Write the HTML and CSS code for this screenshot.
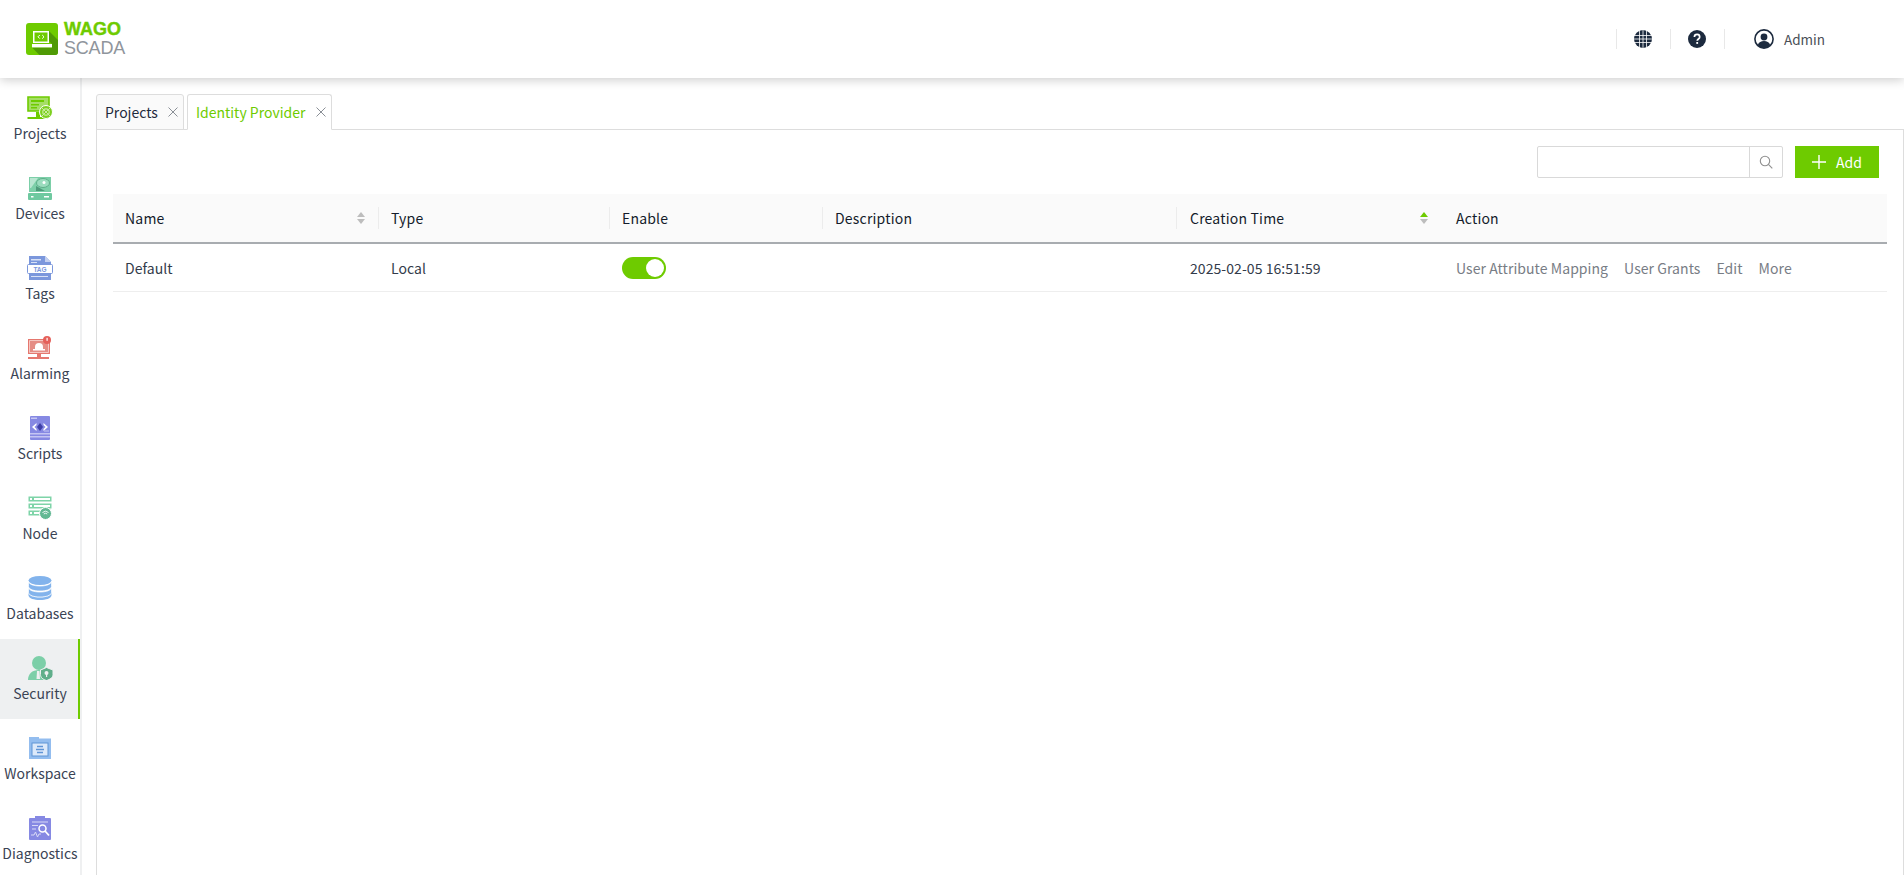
FILE: index.html
```html
<!DOCTYPE html>
<html lang="en">
<head>
<meta charset="utf-8">
<title>WAGO SCADA</title>
<link rel="stylesheet" href="styles.css">
</head>
<body>
<header class="topbar">
  <div class="brand">
    <svg class="brand-mark" viewBox="0 0 32 32" width="32" height="32">
      <rect width="32" height="32" rx="3" fill="#6ecb00"/>
      <path d="M6 24.600 L26 24.600 L26 21 L23 18 L23 8 L32 17 L32 29 A3 3 0 0 1 29 32 L13.500 32 Z" fill="#4f9a05"/>
      <rect x="7" y="8" width="16" height="12" fill="#fff"/>
      <rect x="8.500" y="9.500" width="13" height="9" fill="#6ecb00"/>
      <rect x="6" y="21" width="20" height="3.400" fill="#fff"/>
      <path d="M13.800 12 L12 13.800 L13.800 15.600 M16.200 12 L18 13.800 L16.200 15.600" fill="none" stroke="#fff" stroke-width="1"/>
    </svg>
    <div class="brand-text">
      <span class="brand-wago">WAGO</span>
      <span class="brand-scada">SCADA</span>
    </div>
  </div>
  <div class="top-actions">
    <span class="top-sep"></span>
    <svg class="top-icon" viewBox="0 0 18 18" width="18" height="18">
      <circle cx="9" cy="9" r="9" fill="#1c2a3e"/>
      <path d="M0 5.500H18M0 9H18M0 12.500H18M5.500 0V18M9 0V18M12.500 0V18" stroke="#fff" stroke-width=".8" fill="none"/>
    </svg>
    <span class="top-sep"></span>
    <svg class="top-icon" viewBox="0 0 18 18" width="18" height="18">
      <circle cx="9" cy="9" r="9" fill="#1c2a3e"/>
      <path d="M6.400 7c0-1.600 1.200-2.600 2.700-2.600S11.700 5.400 11.700 6.900c0 2-2.500 2.100-2.500 3.900" fill="none" stroke="#fff" stroke-width="1.700"/>
      <rect x="8.300" y="12" width="1.800" height="1.900" fill="#fff"/>
    </svg>
    <span class="top-sep"></span>
    <div class="user">
      <svg viewBox="0 0 20 20" width="20" height="20">
        <circle cx="10" cy="10" r="9.100" fill="none" stroke="#1c2a3e" stroke-width="1.600"/>
        <circle cx="10" cy="8" r="3.400" fill="#1c2a3e"/>
        <path d="M3.800 16c1-3 3.300-4 6.200-4s5.200 1 6.200 4c-1.600 1.700-3.800 3-6.200 3s-4.600-1.300-6.200-3z" fill="#1c2a3e"/>
      </svg>
      <span class="user-name">Admin</span>
    </div>
  </div>
</header>

<div class="layout">
  <nav class="sidebar">
    <a class="nav-item">
      <svg viewBox="0 0 26 24" width="26" height="24">
        <path d="M1 1H22V15H1Z" fill="#a6de66" stroke="#6ecb00" stroke-width="1.600"/>
        <path d="M4 4H17V6H4ZM4 8H12V9.500H4ZM4 11H10V12.500H4Z" fill="#6ecb00"/>
        <rect x="0.500" y="21" width="20" height="2" fill="#6ecb00"/>
        <rect x="9" y="16" width="4" height="5" fill="#6ecb00"/>
        <circle cx="19" cy="16" r="6.500" fill="#7ccf1e" stroke="#fff"/>
        <circle cx="19" cy="16" r="3.200" fill="none" stroke="#c8eda0" stroke-width="1.200"/>
        <path d="M15 12L23 20M23 12L15 20" stroke="#c8eda0"/>
      </svg>
      <span>Projects</span>
    </a>
    <a class="nav-item">
      <svg viewBox="0 0 26 24" width="26" height="24">
        <path d="M2 1H24V16H2Z" fill="#7ccfa8"/>
        <path d="M3 2H11L4 12H3Z" fill="#b9e6d1"/>
        <ellipse cx="16" cy="7" rx="6.500" ry="4.500" fill="#9bdcbe" stroke="#5fae8a"/>
        <circle cx="17" cy="6.500" r="1.500" fill="#fff"/>
        <path d="M9 10L18 15H9Z" fill="#4e9a7a"/>
        <rect x="1" y="17" width="24" height="7" rx="1" fill="#6fc9a0"/>
        <rect x="4" y="20" width="2.500" height="1.500" fill="#fff"/>
        <rect x="17" y="20" width="5" height="1.500" fill="#fff"/>
      </svg>
      <span>Devices</span>
    </a>
    <a class="nav-item">
      <svg viewBox="0 0 26 24" width="26" height="24">
        <path d="M2 0H18L24 6V24H2Z" fill="#7b97dc"/>
        <path d="M18 0L24 6H18Z" fill="#c2cff0"/>
        <path d="M4 3H14V4.500H4ZM4 6H10V7H4ZM4 20H21V21H4Z" fill="#d8e1f6"/>
        <rect x="0.500" y="8.500" width="25" height="9" rx="1" fill="#fff" stroke="#7b97dc"/>
        <text class="icon-tag" x="13" y="16">TAG</text>
      </svg>
      <span>Tags</span>
    </a>
    <a class="nav-item">
      <svg viewBox="0 0 26 24" width="26" height="24">
        <path d="M1 3H23V18H1Z" fill="#e5776e"/>
        <path d="M2.500 4.500H21.500V16.500H2.500Z" fill="#e58d85" stroke="#f5c7c2"/>
        <path d="M8 11a4 4 0 0 1 8 0v2H8Z" fill="#fff"/>
        <rect x="6" y="13" width="12" height="1.500" fill="#fff"/>
        <rect x="10" y="18" width="4" height="3" fill="#e5776e"/>
        <rect x="1" y="21" width="21" height="2" fill="#e5776e"/>
        <circle cx="20" cy="4" r="4" fill="#e5605a"/>
        <rect x="19.500" y="1.800" width="1.200" height="3" fill="#fff"/>
      </svg>
      <span>Alarming</span>
    </a>
    <a class="nav-item">
      <svg viewBox="0 0 26 24" width="26" height="24">
        <rect x="3" y="0" width="20" height="24" rx="1" fill="#8689e3"/>
        <rect x="4" y="1.500" width="6" height="1.500" fill="#c5c6f3"/>
        <path d="M9.500 7L5 11L9.500 15L9.500 13L7.500 11L9.500 9ZM16.500 7L21 11L16.500 15L16.500 13L18.500 11L16.500 9Z" fill="#fff"/>
        <path d="M13 7L16 11L13 15L10 11Z" fill="#3f3fa8"/>
        <path d="M17 14.500H22V15.500H17Z" fill="#c5c6f3"/>
        <rect x="3" y="17" width="20" height="1.500" fill="#c5c6f3"/>
        <rect x="3" y="20" width="20" height="1.500" fill="#c5c6f3"/>
      </svg>
      <span>Scripts</span>
    </a>
    <a class="nav-item">
      <svg viewBox="0 0 26 24" width="26" height="24">
        <rect x="1.500" y="0.500" width="23" height="5" fill="#7ed4a8"/>
        <rect x="1.500" y="7.500" width="23" height="5" fill="#7ed4a8"/>
        <rect x="1.500" y="14.500" width="17" height="5" fill="#7ed4a8"/>
        <rect x="3" y="2" width="2" height="2" fill="#fff"/><rect x="7" y="2" width="16" height="2" fill="#fff"/>
        <rect x="3" y="9" width="2" height="2" fill="#fff"/><rect x="7" y="9" width="16" height="2" fill="#fff"/>
        <rect x="3" y="16" width="2" height="2" fill="#fff"/><rect x="7" y="16" width="10" height="2" fill="#fff"/>
        <circle cx="18.500" cy="17.500" r="6" fill="#62b893" stroke="#fff"/>
        <path d="M15.500 16.500a4.500 4.500 0 0 1 6 0M16.800 18a2.500 2.500 0 0 1 3.400 0" fill="none" stroke="#fff" stroke-width=".9"/>
      </svg>
      <span>Node</span>
    </a>
    <a class="nav-item">
      <svg viewBox="0 0 26 24" width="26" height="24">
        <ellipse cx="13" cy="4.500" rx="11.500" ry="4.500" fill="#82b3ec"/>
        <path d="M1.500 5.500c.5 3 5.500 4.500 11.500 4.500s11-1.500 11.500-4.500v5c-.5 3-5.500 4.500-11.500 4.500S2 13.500 1.500 10.500Z" fill="#82b3ec" stroke="#fff" stroke-width=".7"/>
        <path d="M1.500 11.500c.5 3 5.500 4.500 11.500 4.500s11-1.500 11.500-4.500v5c-.5 3-5.500 4.500-11.500 4.500S2 19.500 1.500 16.500Z" fill="#82b3ec" stroke="#fff" stroke-width=".7"/>
        <path d="M1.500 17c.5 3 5.500 4.500 11.500 4.500s11-1.500 11.500-4.500v2.500c-.5 3-5.500 4.500-11.500 4.500S2 22.500 1.500 19.500Z" fill="#82b3ec"/>
      </svg>
      <span>Databases</span>
    </a>
    <a class="nav-item is-active">
      <svg viewBox="0 0 26 24" width="26" height="24">
        <circle cx="12" cy="7" r="7" fill="#7ccfa8"/>
        <path d="M1 24c0-6 4-10 11-10s9 4 9 10Z" fill="#7ccfa8"/>
        <path d="M10 15L9.500 23H13L12.500 15Z" fill="#eef0f1"/>
        <path d="M19.500 11.500L26 14V18.500C26 21.500 23 23.500 19.500 24.500C16 23.500 13.500 21.500 13.500 18.500V14Z" fill="#5fae8a" stroke="#eef0f1"/>
        <circle cx="19.500" cy="17" r="2" fill="#eef0f1"/>
        <rect x="19" y="18" width="1.200" height="3" fill="#eef0f1"/>
      </svg>
      <span>Security</span>
    </a>
    <a class="nav-item">
      <svg viewBox="0 0 26 24" width="26" height="24">
        <path d="M2 1H12V2.500H24V23H2Z" fill="#93bdef"/>
        <rect x="5" y="7" width="16" height="13" fill="#dce9fa" stroke="#5f95d6"/>
        <path d="M10 10.500H16M9 13.500H17M10 16.500H16" stroke="#5f95d6" stroke-width="1.500"/>
      </svg>
      <span>Workspace</span>
    </a>
    <a class="nav-item">
      <svg viewBox="0 0 26 24" width="26" height="24">
        <rect x="8" y="0" width="10" height="3" fill="#8689e3"/>
        <rect x="2" y="2" width="22" height="22" rx="1" fill="#8689e3"/>
        <path d="M5 6H21M5 9.500H11M5 13H9" stroke="#d9daf6" fill="none"/>
        <path d="M4 19H7L8.500 16L10.500 21L12 18H14" stroke="#d9daf6" fill="none"/>
        <circle cx="15.500" cy="12.500" r="3.500" fill="none" stroke="#fff" stroke-width="1.500"/>
        <path d="M18 15L22 19.500" stroke="#fff" stroke-width="1.800"/>
      </svg>
      <span>Diagnostics</span>
    </a>
  </nav>

  <main class="content">
    <div class="tabs">
      <div class="tab">
        <span>Projects</span>
        <svg class="tab-close" viewBox="0 0 10 10" width="10" height="10"><path d="M.5.500L9.500 9.500M9.500.500L.5 9.500" stroke="#8a8f96" fill="none"/></svg>
      </div>
      <div class="tab is-active">
        <span>Identity Provider</span>
        <svg class="tab-close" viewBox="0 0 10 10" width="10" height="10"><path d="M.5.500L9.500 9.500M9.500.500L.5 9.500" stroke="#8a8f96" fill="none"/></svg>
      </div>
    </div>
    <section class="panel">
      <div class="toolbar">
        <div class="search">
          <div class="search-field"></div>
          <div class="search-btn">
            <svg viewBox="0 0 14 14" width="14" height="14"><circle cx="6" cy="6" r="4.700" fill="none" stroke="#8f8f8f" stroke-width="1.100"/><path d="M9.400 9.400L13.300 13.300" stroke="#8f8f8f" stroke-width="1.100"/></svg>
          </div>
        </div>
        <button class="add-btn" type="button">
          <svg viewBox="0 0 14 14" width="14" height="14"><path d="M7 0V14M0 7H14" stroke="#fff" stroke-width="1.400"/></svg>
          <span>Add</span>
        </button>
      </div>
      <div class="grid grid-head">
        <div class="th th-first"><span>Name</span><span class="sort"><i class="up"></i><i class="down"></i></span></div>
        <div class="th">Type</div>
        <div class="th">Enable</div>
        <div class="th">Description</div>
        <div class="th th-time"><span>Creation Time</span><span class="sort"><i class="up on"></i><i class="down"></i></span></div>
        <div class="th th-plain">Action</div>
      </div>
      <div class="grid grid-row">
        <div class="td td-first">Default</div>
        <div class="td">Local</div>
        <div class="td"><span class="toggle"><span class="knob"></span></span></div>
        <div class="td"></div>
        <div class="td td-date">2025-02-05 16:51:59</div>
        <div class="td actions">
          <a>User Attribute Mapping</a><a>User Grants</a><a>Edit</a><a>More</a>
        </div>
      </div>
    </section>
  </main>
</div>
</body>
</html>
```
FILE: styles.css
```css
* { box-sizing: border-box; }
html, body { height: 100%; }
body {
  margin: 0;
  height: 100vh;
  overflow: hidden;
  display: flex;
  flex-direction: column;
  background: #fff;
  color: #1f2a3d;
  font: 14px/22px "Noto Sans CJK SC", "Noto Sans", sans-serif;
}
.topbar {
  height: 78px;
  flex: none;
  display: flex;
  justify-content: space-between;
  align-items: center;
  padding: 0 0 0 26px;
  background: #fff;
  box-shadow: 0 2px 10px rgba(0, 0, 0, .2);
  position: relative;
  z-index: 2;
}
.brand { display: flex; align-items: center; gap: 6px; }
.brand-text { display: flex; flex-direction: column; }
.brand-wago {
  font: 700 18px/19px "Liberation Sans", sans-serif;
  color: #6ecb00;
  -webkit-text-stroke: .4px #6ecb00;
}
.brand-scada {
  font: 400 18px/19px "Liberation Sans", sans-serif;
  color: #8f959c;
  letter-spacing: -.2px;
}
.top-actions { display: flex; align-items: center; height: 20px; margin-right: 79px; }
.top-sep { width: 1px; height: 20px; background: #e8e8e8; }
.top-icon { margin: 0 17.5px; }
.user { display: flex; align-items: center; gap: 10px; margin-left: 29px; }
.user-name { color: #4a4f57; font-size: 13.5px; }

.layout { flex: 1; display: flex; min-height: 0; }
.sidebar {
  width: 82px;
  flex: none;
  padding-top: 1px;
  overflow: hidden;
  border-right: 2px solid #eff0f1;
}
.nav-item {
  height: 80px;
  display: flex;
  flex-direction: column;
  align-items: center;
  padding-top: 17px;
  gap: 2px;
  color: #3a4354;
  width: 80px;
}
.is-active.nav-item { background: #eef0f1; box-shadow: inset -2px 0 0 #6ecb00; }
.icon-tag { font: 700 6.5px "Liberation Sans", sans-serif; fill: #7b97dc; text-anchor: middle; }

.content { flex: 1; min-width: 0; display: flex; flex-direction: column; padding: 16px 0 0 14px; }
.tabs { display: flex; gap: 3px; height: 36px; flex: none; margin-bottom: -1px; position: relative; z-index: 1; }
.tab {
  display: flex;
  align-items: center;
  gap: 10px;
  padding: 0 5px 0 8px;
  border: 1px solid #ddd;
  border-radius: 3px 3px 0 0;
  background: #fafafa;
  color: #1f2a3d;
}
.tab.is-active { background: #fff; border-bottom-color: #fff; color: #6ecb00; gap: 11px; }
.panel { flex: 1; border: 1px solid #ddd; padding: 16px 16px 0 16px; min-height: 0; margin-bottom: -4px; }
.toolbar { display: flex; justify-content: flex-end; gap: 12px; height: 32px; margin-bottom: 16px; padding-right: 8px; }
.search { display: flex; width: 246px; border: 1px solid #d9d9d9; border-radius: 2px; }
.search-field { flex: 1; }
.search-btn { width: 33px; display: flex; align-items: center; justify-content: center; border-left: 1px solid #d9d9d9; }
.add-btn {
  width: 84px;
  border: 0;
  background: #6ecb00;
  color: #fff;
  font: 400 14px "Noto Sans CJK SC", sans-serif;
  display: flex;
  align-items: center;
  justify-content: center;
  gap: 10px;
  padding: 0;
}
.grid { display: grid; grid-template-columns: 265px 231px 213px 354px 266px 1fr; letter-spacing: .06px; }
.grid-head { height: 50px; background: #fafafa; border-bottom: 2px solid #a8acb0; align-items: center; letter-spacing: .2px; }
.grid-row { height: 48px; border-bottom: 1px solid #eee; align-items: center; }
.th {
  height: 22px;
  display: flex;
  align-items: center;
  justify-content: space-between;
  padding: 0 14px 0 12px;
  border-left: 1px solid #ececec;
  font-weight: 400;
  color: #141c2b;
}
.th-first, .th-plain { border-left: 0; }
.th-first { padding-right: 13px; }
.th-time { padding-left: 13px; }
.th-plain { padding-left: 14px; }
.td { padding: 0 13px; color: #333b4a; display: flex; align-items: center; }
.td-first { padding-left: 12px; }
.td-date { padding-left: 14px; }
.sort { display: flex; flex-direction: column; gap: 2px; }
.sort i { display: block; width: 0; height: 0; border-left: 4px solid transparent; border-right: 4px solid transparent; }
.sort .up { border-bottom: 5px solid #bdbdbd; }
.sort .down { border-top: 5px solid #bdbdbd; }
.sort .up.on { border-bottom-color: #6ecb00; }
.toggle { width: 44px; height: 22px; border-radius: 11px; background: #6ecb00; display: flex; justify-content: flex-end; align-items: center; padding-right: 2px; }
.knob { width: 18px; height: 18px; border-radius: 50%; background: #fff; }
.actions { gap: 16px; color: #787d85; white-space: nowrap; padding-left: 14px; }
```
